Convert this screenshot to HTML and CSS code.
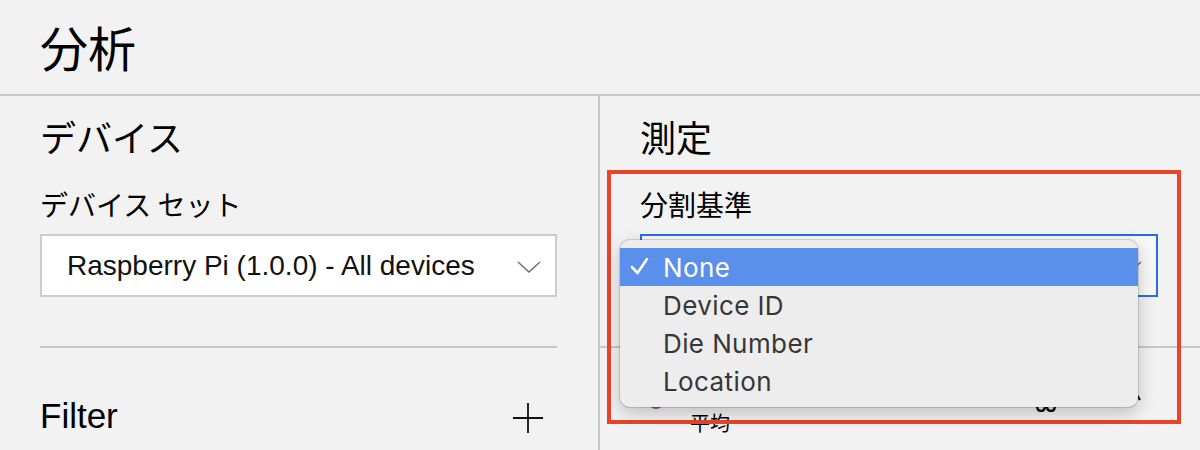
FILE: index.html
```html
<!DOCTYPE html>
<html lang="ja">
<head>
<meta charset="utf-8">
<title>分析</title>
<link rel="stylesheet" href="styles.css">
</head>
<body>
<header class="page-header">
  <h1 class="page-title">分析</h1>
</header>
<main class="panels">
  <section class="panel panel-left">
    <h2 class="panel-title">デバイス</h2>
    <div class="field-label">デバイス セット</div>
    <div class="select">
      <span class="select-value">Raspberry Pi (1.0.0) - All devices</span>
      <svg class="chevron" width="24" height="12" viewBox="0 0 24 12"><path d="M1 1 L12 11 L23 1" fill="none" stroke="#6b6b6b" stroke-width="1.3"/></svg>
    </div>
    <div class="divider"></div>
    <div class="filter-row">
      <span class="filter-title">Filter</span>
      <svg class="plus" width="30" height="30" viewBox="0 0 30 30"><path d="M15 0 V30 M0 15 H30" stroke="#111" stroke-width="1.8"/></svg>
    </div>
  </section>
  <section class="panel panel-right">
    <div class="measure-head">
      <h2 class="panel-title">測定</h2>
      <div class="field-label">分割基準</div>
      <div class="select select-focused">
        <span class="select-value"></span>
        <svg class="chevron" width="24" height="12" viewBox="0 0 24 12"><path d="M1 1 L12 11 L23 1" fill="none" stroke="#6b6b6b" stroke-width="1.3"/></svg>
      </div>
    </div>
    <div class="measure-row">
      <span class="dot"></span>
      <div class="measure-text">
        <div class="measure-name"></div>
        <div class="measure-agg">平均</div>
      </div>
      <svg class="row-icon" width="24" height="27" viewBox="0 0 24 27"><path d="M3 20 Q3 26 7 26 Q11 26 11 21 M13 21 Q13 26 17 26 Q21 26 21 20" fill="none" stroke="#111" stroke-width="2.4"/></svg>
      <svg class="row-chevron" width="18" height="14" viewBox="0 0 18 14"><path d="M1 13 L9 2 Q12 5 16 12" fill="none" stroke="#111" stroke-width="2.2"/></svg>
    </div>
  </section>
</main>

<div class="annotation"></div>

<div class="dropdown-menu">
  <div class="menu-item selected">
    <svg class="check" width="19" height="18" viewBox="0 0 19 18"><path d="M2 10 L7.5 16 L17 2" fill="none" stroke="#fff" stroke-width="2.6" stroke-linecap="round" stroke-linejoin="round"/></svg>
    <span>None</span>
  </div>
  <div class="menu-item"><span>Device ID</span></div>
  <div class="menu-item"><span>Die Number</span></div>
  <div class="menu-item"><span>Location</span></div>
</div>
</body>
</html>
```

FILE: styles.css
```css
* { box-sizing: border-box; }

html, body {
  margin: 0;
  padding: 0;
  width: 1200px;
  height: 450px;
  overflow: hidden;
  background: #f2f2f2;
  color: #000;
  font-family: "Noto Sans CJK JP", "Liberation Sans", sans-serif;
}

.page-header {
  height: 96px;
  border-bottom: 2px solid #c8c8c8;
  padding: 18px 0 0 40px;
}

.page-title {
  margin: 0;
  font-size: 48px;
  line-height: 56px;
  font-weight: 400;
}

.panels {
  display: grid;
  grid-template-columns: 600px 600px;
  height: 354px;
}

.panel-left {
  border-right: 2px solid #c8c8c8;
  padding: 18px 41px 0 40px;
}

.panel-title {
  margin: 0;
  font-size: 36px;
  line-height: 44px;
  font-weight: 400;
}

.field-label {
  margin-top: 30px;
  font-size: 28px;
  line-height: 32px;
}

.select {
  margin-top: 14px;
  height: 63px;
  border: 2px solid #cccccc;
  background: #ffffff;
  display: flex;
  align-items: center;
  padding: 0 14px 0 25px;
}

.select-value {
  flex: 1;
  font-family: "Liberation Sans", sans-serif;
  font-size: 28px;
  color: #111;
  white-space: nowrap;
}

.chevron { flex: none; margin-top: 2px; }

.select-focused {
  border-color: #2c6be6;
  background: #f8f8f8;
}

.divider {
  margin-top: 49px;
  height: 2px;
  background: #c8c8c8;
}

.filter-row {
  margin-top: 48px;
  display: flex;
  align-items: center;
  justify-content: space-between;
  padding-right: 14px;
}

.filter-title {
  font-family: "Liberation Sans", sans-serif;
  font-size: 35px;
  line-height: 40px;
}

.plus { margin-top: 4px; }

.measure-head {
  padding: 18px 42px 49px 40px;
  border-bottom: 2px solid #c8c8c8;
}

.measure-row {
  display: flex;
  align-items: flex-start;
  padding: 30px 58px 0 47px;
}

.dot {
  width: 18px;
  height: 18px;
  border-radius: 50%;
  background: #8e4aa8;
  margin-top: 13px;
  flex: none;
}

.measure-text {
  margin-left: 25px;
  flex: 1;
}

.measure-name {
  height: 32px;
}

.measure-agg {
  font-size: 20px;
  line-height: 26px;
}

.row-icon { margin-top: 7px; flex: none; }
.row-chevron { margin-top: 10px; margin-left: 66px; flex: none; }

/* annotation highlight drawn over the screenshot */
.annotation {
  position: absolute;
  left: 607px;
  top: 170px;
  width: 574px;
  height: 254px;
  border: 4px solid #e9442b;
}

/* open native dropdown list */
.dropdown-menu {
  position: absolute;
  left: 620px;
  top: 240px;
  width: 518px;
  height: 167px;
  padding-top: 8px;
  background: #ededed;
  border-radius: 10px;
  box-shadow: 0 0 0 1px rgba(0, 0, 0, 0.13), 0 6px 18px rgba(0, 0, 0, 0.22);
  font-family: "Inter", "Liberation Sans", sans-serif;
}

.menu-item {
  height: 38px;
  display: flex;
  align-items: center;
  padding-left: 43px;
  font-size: 26px;
  letter-spacing: 0.4px;
  color: #363636;
  position: relative;
}

.menu-item.selected {
  background: #5a8fec;
  color: #fff;
}

.check {
  position: absolute;
  left: 10px;
  top: 9px;
}
```
